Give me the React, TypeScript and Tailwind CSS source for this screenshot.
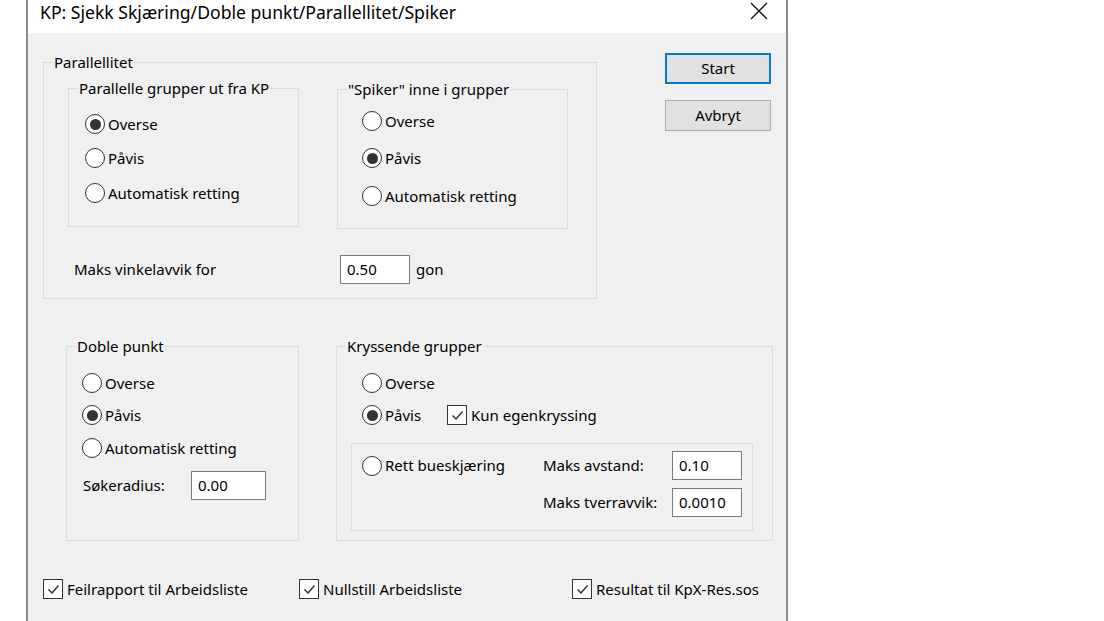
import React from 'react';

const GroupBox: React.FC<{ title: string; className?: string; children?: React.ReactNode }> = ({ title, className = '', children }) => (
  <fieldset className={`border border-[#dcdcdc] p-0 m-0 min-w-0 shrink-0 ${className}`}>
    <legend className="ml-[9px] px-[1px] leading-[18px]">{title}</legend>
    {children}
  </fieldset>
);

const Radio: React.FC<{ checked?: boolean; label: string; className?: string }> = ({ checked, label, className = '' }) => (
  <div className={`flex items-center h-[20px] ${className}`}>
    <span className="w-[20px] h-[20px] rounded-full border-[1.5px] border-[#333333] bg-white flex items-center justify-center shrink-0">
      {checked && <span className="w-[11px] h-[11px] rounded-full bg-[#333333]" />}
    </span>
    <span className="ml-[3px] whitespace-nowrap">{label}</span>
  </div>
);

const Check: React.FC<{ label: string; className?: string }> = ({ label, className = '' }) => (
  <div className={`flex items-center h-[20px] ${className}`}>
    <span className="w-[20px] h-[20px] border-[1.5px] border-[#333333] bg-white flex items-center justify-center shrink-0">
      <svg width="15" height="15" viewBox="0 0 15 15">
        <path d="M2.5 7.5 L6 11 L12.5 3.5" fill="none" stroke="#333333" strokeWidth="1.5" />
      </svg>
    </span>
    <span className="ml-[4px] whitespace-nowrap">{label}</span>
  </div>
);

const Field: React.FC<{ value: string; className?: string }> = ({ value, className = '' }) => (
  <div className={`bg-white border border-[#7a7a7a] flex items-center pl-[6px] shrink-0 ${className}`}>{value}</div>
);

const App: React.FC = () => {
  return (
    <div className="w-[1104px] h-[621px] bg-white overflow-hidden font-['Noto_Sans',sans-serif] text-[15px] text-black">
      <div className="ml-[26px] w-[762px] h-[621px] border-x-2 border-[#8c8c8c] flex flex-col">
        {/* title bar */}
        <div className="h-[33px] bg-white flex items-start justify-between shrink-0">
          <span className="ml-[12px] text-[17.6px] leading-[24px]">KP: Sjekk Skjæring/Doble punkt/Parallellitet/Spiker</span>
          <svg width="18" height="18" viewBox="0 0 18 18" className="mt-[2px] mr-[18px]">
            <path d="M1 1 L17 17 M17 1 L1 17" stroke="#111111" strokeWidth="1.3" />
          </svg>
        </div>

        <div className="flex-1 bg-[#f0f0f0]">
          {/* top row */}
          <div className="flex items-start mt-[20px] ml-[15px]">
            <GroupBox title="Parallellitet" className="w-[554px] h-[246px]">
              <div className="flex items-start">
                <GroupBox title="Parallelle grupper ut fra KP" className="ml-[24px] mt-[8px] w-[231px] h-[148px]">
                  <div className="pl-[16px]">
                    <Radio checked label="Overse" className="mt-[17px]" />
                    <Radio label="Påvis" className="mt-[14px]" />
                    <Radio label="Automatisk retting" className="mt-[15px]" />
                  </div>
                </GroupBox>
                <GroupBox title={'"Spiker" inne i grupper'} className="ml-[38px] mt-[9px] w-[231px] h-[149px]">
                  <div className="pl-[24px]">
                    <Radio label="Overse" className="mt-[13px]" />
                    <Radio checked label="Påvis" className="mt-[17px]" />
                    <Radio label="Automatisk retting" className="mt-[18px]" />
                  </div>
                </GroupBox>
              </div>
              <div className="flex items-center mt-[26px] pl-[30px]">
                <span className="w-[266px]">Maks vinkelavvik for</span>
                <Field value="0.50" className="w-[70px] h-[29px]" />
                <span className="ml-[6px]">gon</span>
              </div>
            </GroupBox>

            <div className="ml-[68px] flex flex-col">
              <button className="w-[106px] h-[31px] bg-[#e1e1e1] border-2 border-[#0078d7] leading-none">Start</button>
              <button className="mt-[16px] w-[106px] h-[31px] bg-[#e1e1e1] border border-[#adadad] leading-none">Avbryt</button>
            </div>
          </div>

          {/* middle row */}
          <div className="flex items-start mt-[38px] ml-[38px]">
            <GroupBox title="Doble punkt" className="w-[233px] h-[204px]">
              <div className="pl-[15px]">
                <Radio label="Overse" className="mt-[18px]" />
                <Radio checked label="Påvis" className="mt-[12px]" />
                <Radio label="Automatisk retting" className="mt-[13px]" />
                <div className="flex items-center mt-[13px] pl-[1px]">
                  <span className="w-[108px]">Søkeradius:</span>
                  <Field value="0.00" className="w-[75px] h-[29px]" />
                </div>
              </div>
            </GroupBox>

            <GroupBox title="Kryssende grupper" className="ml-[37px] w-[437px] h-[204px]">
              <div className="pl-[25px]">
                <Radio label="Overse" className="mt-[18px]" />
                <div className="flex items-center mt-[12px]">
                  <Radio checked label="Påvis" className="w-[85px]" />
                  <Check label="Kun egenkryssing" />
                </div>
              </div>
              <div className="ml-[14px] mt-[18px] w-[402px] h-[88px] border border-[#dcdcdc] pl-[10px] pt-[7px]">
                <div className="flex items-center h-[29px]">
                  <Radio label="Rett bueskjæring" className="w-[181px]" />
                  <span className="w-[129px]">Maks avstand:</span>
                  <Field value="0.10" className="w-[70px] h-[29px]" />
                </div>
                <div className="flex items-center h-[29px] mt-[8px] pl-[181px]">
                  <span className="w-[129px]">Maks tverravvik:</span>
                  <Field value="0.0010" className="w-[70px] h-[29px]" />
                </div>
              </div>
            </GroupBox>
          </div>

          {/* bottom checks */}
          <div className="flex items-center mt-[38px] ml-[15px]">
            <Check label="Feilrapport til Arbeidsliste" className="w-[256px]" />
            <Check label="Nullstill Arbeidsliste" className="w-[273px]" />
            <Check label="Resultat til KpX-Res.sos" />
          </div>
        </div>
      </div>
    </div>
  );
};

export default App;
